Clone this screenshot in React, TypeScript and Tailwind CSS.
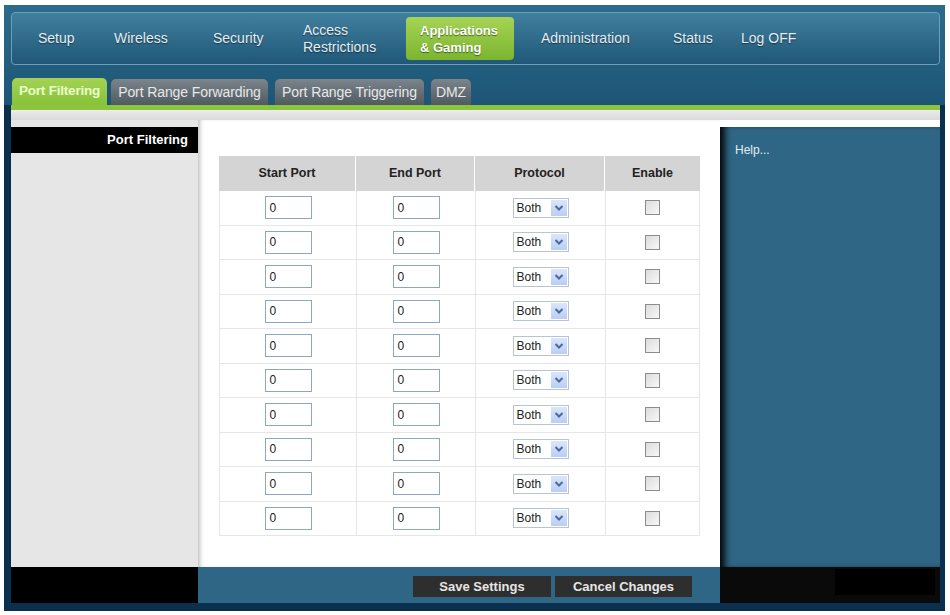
const navItems = [
  { label: ["Setup"], w: "w-[76px]" },
  { label: ["Wireless"], w: "w-[99px]" },
  { label: ["Security"], w: "w-[90px]" },
  { label: ["Access", "Restrictions"], w: "w-[103px]" },
];

const navRight = [
  { label: "Administration", w: "w-[132px]" },
  { label: "Status", w: "w-[68px]" },
  { label: "Log OFF", w: "w-[80px]" },
];

const tabs = [
  { label: "Port Range Forwarding", cls: "ml-[4px] w-[157px]" },
  { label: "Port Range Triggering", cls: "ml-[7px] w-[149px]" },
  { label: "DMZ", cls: "ml-[7px] w-[40px]" },
];

const rows = Array.from({ length: 10 }, (_, i) => i);

const Chevron = () => (
  <svg width="10" height="8" viewBox="0 0 10 8">
    <path d="M1.5 2 L5 5.5 L8.5 2" fill="none" stroke="#4a6a9c" strokeWidth="2" />
  </svg>
);

const PortRow = () => (
  <div className="flex h-[34.5px] border-b border-[#e6e6e6]">
    <div className="flex w-[137px] items-center justify-center border-r border-[#e6e6e6]">
      <div className="flex h-[23px] w-[47px] items-center border border-[#8fa6bd] bg-white pl-[4px] text-[12px] text-[#222]">0</div>
    </div>
    <div className="flex w-[119px] items-center justify-center border-r border-[#e6e6e6]">
      <div className="flex h-[23px] w-[47px] items-center border border-[#8fa6bd] bg-white pl-[4px] text-[12px] text-[#222]">0</div>
    </div>
    <div className="flex w-[130px] items-center justify-center border-r border-[#e6e6e6]">
      <div className="flex h-[20px] w-[56px] items-center justify-between border border-[#b8c4d6] bg-white pl-[3px] pr-[1px] text-[12px] text-[#222]">
        <span>Both</span>
        <span className="flex h-[16px] w-[16px] items-center justify-center bg-gradient-to-b from-[#dbe6fb] to-[#b9cdf5]">
          <Chevron />
        </span>
      </div>
    </div>
    <div className="flex flex-1 items-center justify-center">
      <div className="h-[15px] w-[15px] border border-[#8c8c8c] bg-gradient-to-br from-[#dcdcdc] to-[#f8f8f8]" />
    </div>
  </div>
);

export default function App() {
  return (
    <div
      className="h-[615px] w-[950px] overflow-hidden bg-white pl-[4px] pt-[5px]"
      style={{ fontFamily: '"Liberation Sans", Arial, sans-serif' }}
    >
      <div className="flex h-[606px] w-[941px] flex-col bg-[#0b2f4f]">
        {/* header */}
        <div className="flex flex-col bg-gradient-to-b from-[#2b6b8b] to-[#1d5576] pl-[7px] pr-[5px] pt-[7px]">
          <div className="flex h-[53px] items-center rounded-[4px] border border-[#6f9db8] bg-gradient-to-b from-[#417f9e] to-[#1f5878] pl-[26px] text-[14px] text-[#e6eef2] [text-shadow:0_1px_1px_rgba(0,0,0,0.5)]">
            {navItems.map((n) => (
              <div key={n.label[0]} className={`${n.w} leading-[17px]`}>
                {n.label.map((l) => (
                  <div key={l}>{l}</div>
                ))}
              </div>
            ))}
            <div className="flex h-[43px] w-[108px] items-center rounded-[4px] bg-gradient-to-b from-[#a6d454] to-[#7bb52e] pl-[14px] text-[13px] font-bold leading-[17px] text-white">
              <div>
                <div>Applications</div>
                <div>&amp; Gaming</div>
              </div>
            </div>
            <div className="ml-[27px] flex">
              {navRight.map((n) => (
                <div key={n.label} className={n.w}>
                  {n.label}
                </div>
              ))}
            </div>
          </div>
          <div className="mt-[13px] flex h-[27px] items-end">
            <div className="ml-[1px] flex h-[27px] w-[95px] items-center justify-center rounded-t-[5px] bg-gradient-to-b from-[#a4d256] to-[#88c23a] text-[13.5px] font-bold tracking-[-0.2px] text-[#eaffc8]">
              Port Filtering
            </div>
            {tabs.map((t) => (
              <div
                key={t.label}
                className={`${t.cls} flex h-[26px] items-center justify-center rounded-t-[5px] bg-gradient-to-b from-[#7c858b] to-[#4f5a61] text-[14px] tracking-[-0.1px] text-[#e8e8e8]`}
              >
                {t.label}
              </div>
            ))}
          </div>
        </div>

        {/* body */}
        <div className="flex flex-1 flex-col pl-[7px] pr-[5px] pb-[8px]">
          <div className="h-[5px] bg-[#8cc43e]" />
          <div className="h-[10px] bg-gradient-to-b from-[#ececec] to-[#dadada]" />
          <div className="flex h-[447px]">
            <div className="flex w-[187px] flex-col bg-[#e6e6e6] pt-[7px]">
              <div className="flex h-[26px] items-center justify-end bg-black pr-[10px] text-[13px] font-bold text-white">
                Port Filtering
              </div>
            </div>
            <div className="w-[522px] bg-white pl-[21px] pt-[36px] shadow-[inset_4px_0_4px_-2px_rgba(0,0,0,0.25)]">
              <div className="w-[481px] text-[12.5px]">
                <div className="flex h-[35px] bg-[#d4d4d4] font-bold text-[#222]">
                  <div className="flex w-[137px] items-center justify-center border-r border-white">Start Port</div>
                  <div className="flex w-[119px] items-center justify-center border-r border-white">End Port</div>
                  <div className="flex w-[130px] items-center justify-center border-r border-white">Protocol</div>
                  <div className="flex flex-1 items-center justify-center">Enable</div>
                </div>
                <div className="border-x border-[#e6e6e6]">
                  {rows.map((r) => (
                    <PortRow key={r} />
                  ))}
                </div>
              </div>
            </div>
            <div className="flex w-[220px] flex-col bg-white pt-[7px]">
              <div className="flex-1 bg-[#2f6585] pl-[15px] pt-[14px] text-[12px] text-[#e4ecf2] shadow-[inset_8px_0_6px_-3px_rgba(0,0,0,0.9)]">
                Help...
              </div>
            </div>
          </div>
          <div className="flex h-[36px]">
            <div className="w-[187px] bg-black" />
            <div className="flex w-[522px] items-start justify-end gap-[4px] bg-[#2f6585] pr-[28px] pt-[9px]">
              <button className="h-[21px] w-[138px] bg-[#2e2e2e] text-[13px] font-bold text-[#e6e6e6]">Save Settings</button>
              <button className="h-[21px] w-[137px] bg-[#2e2e2e] text-[13px] font-bold text-[#e6e6e6]">Cancel Changes</button>
            </div>
            <div className="flex w-[220px] justify-end bg-[#0a0a0a] pr-[5px] pt-[2px]">
              <div className="h-[26px] w-[100px] bg-black" />
            </div>
          </div>
        </div>
      </div>
    </div>
  );
}
